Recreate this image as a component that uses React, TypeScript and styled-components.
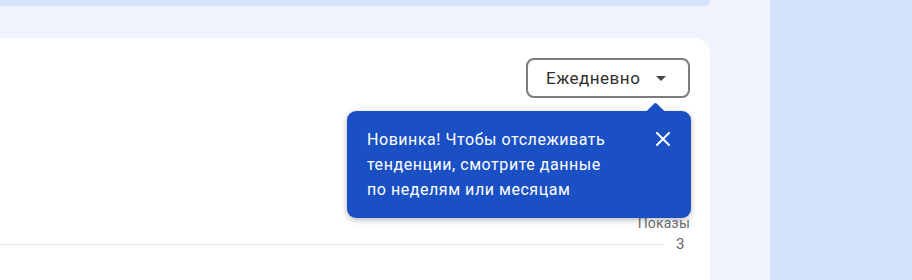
import React from 'react'
import styled, {createGlobalStyle} from 'styled-components'

// -------------------------------------------------------------
// Global.
// -------------------------------------------------------------

const GlobalStyle = createGlobalStyle`
  html, body {
    margin: 0;
    padding: 0;
    height: 100%;
  }

  body {
    font-family: Roboto, "Noto Sans", "Liberation Sans", sans-serif;
    background: #f0f4fd;
  }

  #root {
    height: 100%;
  }
`

// -------------------------------------------------------------
// Components.
// -------------------------------------------------------------

const Page = styled.div`
  display: flex;
  height: 280px;
  overflow: hidden;

  background: #f0f4fd;
`

const MainColumn = styled.main`
  display: flex;
  flex-direction: column;

  width: 710px;
  margin-right: 60px;
`

const TopCard = styled.div`
  height: 6px;

  background: #d3e3fd;
  border-bottom-right-radius: 12px;
`

const Card = styled.section`
  position: relative;
  flex: 1;

  margin-top: 32px;

  background: #ffffff;
  border-top-right-radius: 16px;
`

const Header = styled.div`
  display: flex;
  justify-content: flex-end;

  padding: 20px 20px 0 0;
`

const Select = styled.button`
  display: flex;
  align-items: center;
  justify-content: space-between;
  box-sizing: border-box;

  width: 164px;
  height: 40px;
  padding: 0 22px 0 18px;

  color: #303030;
  background: #ffffff;
  border: 2px solid #7d7d7d;
  border-radius: 8px;

  font-family: inherit;
  font-size: 17px;
  letter-spacing: 0.5px;
`

const Caret = styled.span`
  width: 0;
  height: 0;

  border-left: 5px solid transparent;
  border-right: 5px solid transparent;
  border-top: 5px solid #444746;
`

const Chart = styled.div`
  display: flex;
  flex-direction: column;
  align-items: flex-end;

  margin-top: 116px;
  padding-right: 20px;
`

const AxisLabel = styled.div`
  color: #6b6e72;

  font-size: 14px;
  line-height: 18px;
  letter-spacing: 0.2px;
`

const AxisRow = styled.div`
  display: flex;
  align-items: center;
  align-self: stretch;
  gap: 12px;

  margin-top: 3px;
`

const GridLine = styled.div`
  flex: 1;
  height: 1px;

  background: #e3e3e3;
`

const Tick = styled.span`
  width: 14px;

  color: #5f6368;

  font-size: 15px;
  text-align: left;
`

const Tooltip = styled.div`
  position: absolute;
  top: 73px;
  left: 347px;
  box-sizing: border-box;

  display: flex;
  align-items: flex-start;
  justify-content: space-between;

  width: 344px;
  height: 107px;
  padding: 16px 16px 0 20px;

  color: #ffffff;
  background: #1a50c4;
  border-radius: 9px;
  box-shadow: 0 2px 6px rgba(0, 0, 0, 0.28);

  &::before {
    content: '';
    position: absolute;
    top: -6px;
    left: 302px;

    width: 13px;
    height: 13px;

    background: #1a50c4;
    border-top-left-radius: 2px;
    transform: rotate(45deg);
  }
`

const TooltipText = styled.p`
  margin: 0;

  font-size: 16px;
  line-height: 25px;
  letter-spacing: 0.55px;
`

const CloseButton = styled.button`
  display: flex;
  align-items: center;
  justify-content: center;

  width: 24px;
  height: 24px;
  margin-top: 0;
  padding: 0;

  background: none;
  border: none;
`

const SidePanel = styled.aside`
  flex: 1;

  background: #d3e3fd;
`

// -------------------------------------------------------------
// Export.
// -------------------------------------------------------------

export default () => {
  return (
    <>
      <GlobalStyle />
      <Page>
        <MainColumn>
          <TopCard />
          <Card>
            <Header>
              <Select type="button">
                Ежедневно
                <Caret />
              </Select>
            </Header>
            <Chart>
              <AxisLabel>Показы</AxisLabel>
              <AxisRow>
                <GridLine />
                <Tick>3</Tick>
              </AxisRow>
            </Chart>
            <Tooltip role="tooltip">
              <TooltipText>
                Новинка! Чтобы отслеживать
                <br />
                тенденции, смотрите данные
                <br />
                по неделям или месяцам
              </TooltipText>
              <CloseButton type="button" aria-label="Закрыть">
                <svg width="14" height="14" viewBox="0 0 14 14">
                  <path
                    d="M1 1 L13 13 M13 1 L1 13"
                    stroke="#ffffff"
                    strokeWidth="2"
                    strokeLinecap="square"
                  />
                </svg>
              </CloseButton>
            </Tooltip>
          </Card>
        </MainColumn>
        <SidePanel />
      </Page>
    </>
  )
}
